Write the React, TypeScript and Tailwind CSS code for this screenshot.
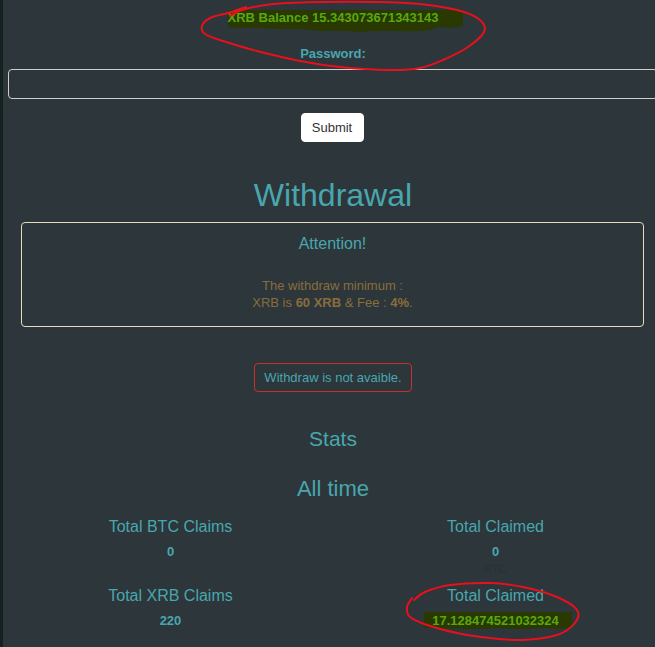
import React from "react";

type P = [number, number];

function smooth(points: P[]): string {
  const pts = points;
  const n = pts.length;
  const get = (i: number): P => pts[Math.max(0, Math.min(n - 1, i))];
  let d = `M ${pts[0][0]} ${pts[0][1]}`;
  for (let i = 0; i < n - 1; i++) {
    const p0 = get(i - 1);
    const p1 = get(i);
    const p2 = get(i + 1);
    const p3 = get(i + 2);
    const c1: P = [p1[0] + (p2[0] - p0[0]) / 6, p1[1] + (p2[1] - p0[1]) / 6];
    const c2: P = [p2[0] - (p3[0] - p1[0]) / 6, p2[1] - (p3[1] - p1[1]) / 6];
    d += ` C ${c1[0].toFixed(1)} ${c1[1].toFixed(1)}, ${c2[0].toFixed(1)} ${c2[1].toFixed(1)}, ${p2[0]} ${p2[1]}`;
  }
  return d;
}

const topLoop: P[] = [
  [246, 7],
  [228, 13],
  [210, 18],
  [202, 26],
  [205, 34],
  [223, 41],
  [257, 51],
  [300, 61],
  [340, 67],
  [390, 70],
  [420, 68],
  [443, 60],
  [468, 47],
  [484, 32],
  [480, 20],
  [457, 10],
  [407, 3],
  [323, 2],
  [273, 4],
  [242, 10],
  [230, 16],
];

const bottomLoop: P[] = [
  [414, 600],
  [425, 592],
  [450, 585],
  [490, 583],
  [523, 587],
  [557, 597],
  [577, 610],
  [575, 623],
  [557, 635],
  [523, 640],
  [490, 638],
  [457, 633],
  [427, 625],
  [410, 617],
  [407, 607],
  [412, 598],
];

export default function App() {
  const teal = "text-[#4aa6ae]";
  return (
    <div className="relative w-[655px] h-[647px] overflow-hidden bg-[#2c363b] flex font-['Liberation_Sans',Arial,sans-serif]">
      {/* marker highlights (behind text) */}
      <svg
        className="absolute left-0 top-0 pointer-events-none"
        width={655}
        height={647}
        viewBox="0 0 655 647"
      >
        <path
          d="M 228 10 L 463 10 L 463 26 Q 450 29 440 27 Q 420 33 400 31 Q 380 30 360 32 Q 340 30 320 31 Q 300 28 280 29 Q 255 27 240 28 L 228 27 Z"
          fill="#2a3802"
        />
        <path
          d="M 424 612 L 572 612 L 572 627 Q 560 630 545 628 Q 520 630 500 628 Q 470 630 450 628 Q 435 629 424 627 Z"
          fill="#2a3802"
        />
      </svg>

      <div className="w-[3px] shrink-0 bg-[#13221f]" />
      <div className="relative w-[650px] shrink-0 ml-[5px] flex flex-col items-center">
        <div className="mt-[10px] h-[16px] leading-[16px] text-[13px] font-bold text-[#58a90f]">
          XRB Balance 15.343073671343143
        </div>
        <div className={`mt-[20px] h-[16px] leading-[16px] text-[13px] font-bold ${teal}`}>
          Password:
        </div>
        <div className="mt-[7px] w-[650px] h-[30px] border border-[#cfcfcf] rounded-[4px]" />
        <button className="mt-[14px] w-[63px] h-[29px] bg-white border border-white rounded-[4px] text-[13px] text-[#333] leading-[27px] -translate-x-[1px]">
          Submit
        </button>
        <div className={`mt-[35px] h-[36px] leading-[36px] text-[32px] ${teal}`}>
          Withdrawal
        </div>
        <div className="mt-[9px] self-start ml-[13px] w-[623px] h-[105px] border border-[#e6dcc0] rounded-[4px] flex flex-col items-center">
          <div className={`mt-[11px] h-[20px] leading-[20px] text-[16px] ${teal}`}>
            Attention!
          </div>
          <div className="mt-[23px] text-[13px] leading-[17px] text-[#8a6d3b] text-center">
            The withdraw minimum :
            <br />
            XRB is <b>60 XRB</b> &amp; Fee : <b>4%</b>.
          </div>
        </div>
        <div className={`mt-[36px] w-[158px] h-[29px] border border-[#c9302c] rounded-[4px] flex items-center justify-center text-[13px] ${teal}`}>
          Withdraw is not avaible.
        </div>
        <div className={`mt-[34px] h-[26px] leading-[26px] text-[21px] ${teal}`}>
          Stats
        </div>
        <div className={`mt-[24px] h-[26px] leading-[26px] text-[22px] ${teal}`}>
          All time
        </div>
        <div className="mt-[15px] w-[650px] grid grid-cols-2">
          <div className="h-[69px] flex flex-col items-center">
            <div className={`h-[20px] leading-[20px] text-[16px] ${teal}`}>Total BTC Claims</div>
            <div className={`mt-[7px] h-[16px] leading-[16px] text-[13px] font-bold ${teal}`}>0</div>
          </div>
          <div className="h-[69px] flex flex-col items-center">
            <div className={`h-[20px] leading-[20px] text-[16px] ${teal}`}>Total Claimed</div>
            <div className={`mt-[7px] h-[16px] leading-[16px] text-[13px] font-bold ${teal}`}>0</div>
            <div className="mt-[2px] h-[14px] leading-[14px] text-[11px] text-[#283136]">BTC</div>
          </div>
          <div className="flex flex-col items-center">
            <div className={`h-[20px] leading-[20px] text-[16px] ${teal}`}>Total XRB Claims</div>
            <div className={`mt-[7px] h-[16px] leading-[16px] text-[13px] font-bold ${teal}`}>220</div>
          </div>
          <div className="flex flex-col items-center">
            <div className={`h-[20px] leading-[20px] text-[16px] ${teal}`}>Total Claimed</div>
            <div className="mt-[7px] h-[16px] leading-[16px] text-[13px] font-bold text-[#58a90f]">
              17.128474521032324
            </div>
          </div>
        </div>
      </div>

      {/* red pen annotations */}
      <svg
        className="absolute left-0 top-0 pointer-events-none"
        width={655}
        height={647}
        viewBox="0 0 655 647"
      >
        <path d={smooth(topLoop)} fill="none" stroke="#e8101c" strokeWidth={2} strokeLinecap="round" />
        <path d={smooth(bottomLoop)} fill="none" stroke="#e8101c" strokeWidth={2} strokeLinecap="round" />
      </svg>
    </div>
  );
}
